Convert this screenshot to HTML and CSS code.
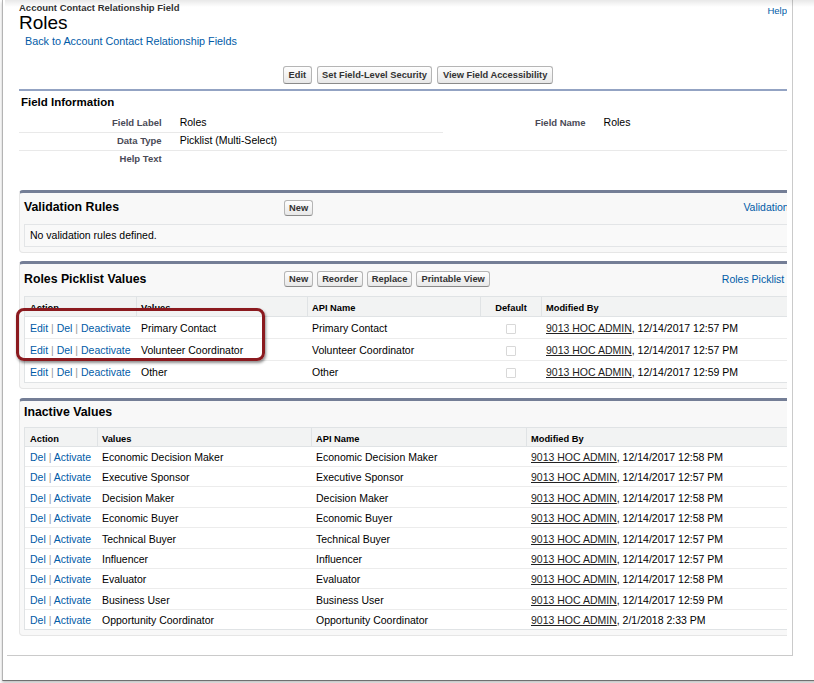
FILE: index.html
```
<!DOCTYPE html>
<html>
<head>
<meta charset="utf-8">
<title>Roles</title>
<link rel="stylesheet" href="styles.css">
</head>
<body>
<div class="window">
  <div class="page">
    <div class="clip">
      <div class="content">
        <div class="pageHeader">
          <div class="titleBlock">
            <div class="ptype">Account Contact Relationship Field</div>
            <h1 class="title">Roles</h1>
            <a class="back" href="#">Back to Account Contact Relationship Fields</a>
          </div>
          <a class="helpTop" href="#">Help</a>
        </div>

        <div class="topButtons">
          <span class="btn">Edit</span>
          <span class="btn">Set Field-Level Security</span>
          <span class="btn">View Field Accessibility</span>
        </div>

        <div class="detail">
          <h2>Field Information</h2>
          <table class="detailList">
            <tr>
              <td class="lab">Field Label</td>
              <td class="dat">Roles</td>
              <td class="lab nb">Field Name</td>
              <td class="dat nb">Roles</td>
            </tr>
            <tr>
              <td class="lab">Data Type</td>
              <td class="dat">Picklist (Multi-Select)</td>
              <td class="lab"></td>
              <td class="dat"></td>
            </tr>
            <tr>
              <td class="lab nb">Help Text</td>
              <td class="dat nb"></td>
              <td class="lab nb"></td>
              <td class="dat nb"></td>
            </tr>
          </table>
        </div>

        <div class="rl rl-first">
          <div class="rlHeader">
            <h3 class="rlTitle">Validation Rules</h3>
            <div class="rlButtons"><span class="btn sm">New</span></div>
            <a class="rlHelp" href="#">Validation Rules Help</a>
          </div>
          <div class="pbBody">
            <div class="noRows">No validation rules defined.</div>
          </div>
        </div>

        <div class="rl rl-roles">
          <div class="rlHeader tall">
            <h3 class="rlTitle">Roles Picklist Values</h3>
            <div class="rlButtons">
              <span class="btn sm">New</span>
              <span class="btn sm">Reorder</span>
              <span class="btn sm">Replace</span>
              <span class="btn sm">Printable View</span>
            </div>
            <a class="rlHelp" href="#">Roles Picklist Values Help</a>
          </div>
          <div class="pbBody">
            <table class="list">
              <colgroup>
                <col class="r1"><col class="r2"><col class="r3"><col class="r4"><col>
              </colgroup>
              <tr>
                <th>Action</th><th>Values</th><th>API Name</th><th class="ctr">Default</th><th>Modified By</th>
              </tr>
              <tr>
                <td><a href="#">Edit</a><span class="sep"> | </span><a href="#">Del</a><span class="sep"> | </span><a href="#">Deactivate</a></td>
                <td>Primary Contact</td><td>Primary Contact</td>
                <td class="ctr"><span class="cb"></span></td>
                <td><span class="user">9013 HOC ADMIN</span>, 12/14/2017 12:57 PM</td>
              </tr>
              <tr>
                <td><a href="#">Edit</a><span class="sep"> | </span><a href="#">Del</a><span class="sep"> | </span><a href="#">Deactivate</a></td>
                <td>Volunteer Coordinator</td><td>Volunteer Coordinator</td>
                <td class="ctr"><span class="cb"></span></td>
                <td><span class="user">9013 HOC ADMIN</span>, 12/14/2017 12:57 PM</td>
              </tr>
              <tr>
                <td><a href="#">Edit</a><span class="sep"> | </span><a href="#">Del</a><span class="sep"> | </span><a href="#">Deactivate</a></td>
                <td>Other</td><td>Other</td>
                <td class="ctr"><span class="cb"></span></td>
                <td><span class="user">9013 HOC ADMIN</span>, 12/14/2017 12:59 PM</td>
              </tr>
            </table>
          </div>
          <div class="highlight"></div>
        </div>

        <div class="rl rl-inactive">
          <div class="rlHeader short">
            <h3 class="rlTitle">Inactive Values</h3>
          </div>
          <div class="pbBody">
            <table class="list compact">
              <colgroup>
                <col class="i1"><col class="i2"><col class="i3"><col>
              </colgroup>
              <tr><th>Action</th><th>Values</th><th>API Name</th><th>Modified By</th></tr>
              <tr><td><a href="#">Del</a><span class="sep"> | </span><a href="#">Activate</a></td><td>Economic Decision Maker</td><td>Economic Decision Maker</td><td><span class="user">9013 HOC ADMIN</span>, 12/14/2017 12:58 PM</td></tr>
              <tr><td><a href="#">Del</a><span class="sep"> | </span><a href="#">Activate</a></td><td>Executive Sponsor</td><td>Executive Sponsor</td><td><span class="user">9013 HOC ADMIN</span>, 12/14/2017 12:57 PM</td></tr>
              <tr><td><a href="#">Del</a><span class="sep"> | </span><a href="#">Activate</a></td><td>Decision Maker</td><td>Decision Maker</td><td><span class="user">9013 HOC ADMIN</span>, 12/14/2017 12:58 PM</td></tr>
              <tr><td><a href="#">Del</a><span class="sep"> | </span><a href="#">Activate</a></td><td>Economic Buyer</td><td>Economic Buyer</td><td><span class="user">9013 HOC ADMIN</span>, 12/14/2017 12:58 PM</td></tr>
              <tr><td><a href="#">Del</a><span class="sep"> | </span><a href="#">Activate</a></td><td>Technical Buyer</td><td>Technical Buyer</td><td><span class="user">9013 HOC ADMIN</span>, 12/14/2017 12:57 PM</td></tr>
              <tr><td><a href="#">Del</a><span class="sep"> | </span><a href="#">Activate</a></td><td>Influencer</td><td>Influencer</td><td><span class="user">9013 HOC ADMIN</span>, 12/14/2017 12:57 PM</td></tr>
              <tr><td><a href="#">Del</a><span class="sep"> | </span><a href="#">Activate</a></td><td>Evaluator</td><td>Evaluator</td><td><span class="user">9013 HOC ADMIN</span>, 12/14/2017 12:58 PM</td></tr>
              <tr><td><a href="#">Del</a><span class="sep"> | </span><a href="#">Activate</a></td><td>Business User</td><td>Business User</td><td><span class="user">9013 HOC ADMIN</span>, 12/14/2017 12:59 PM</td></tr>
              <tr><td><a href="#">Del</a><span class="sep"> | </span><a href="#">Activate</a></td><td>Opportunity Coordinator</td><td>Opportunity Coordinator</td><td><span class="user">9013 HOC ADMIN</span>, 2/1/2018 2:33 PM</td></tr>
            </table>
          </div>
        </div>
      </div>
    </div>
  </div>
</div>
<div class="topShade"></div>
</body>
</html>
```
FILE: styles.css
```
* { box-sizing: border-box; }
html, body { margin: 0; padding: 0; }
body {
  width: 814px;
  height: 683px;
  overflow: hidden;
  position: relative;
  background: #fff;
  font-family: "Liberation Sans", Arial, Helvetica, sans-serif;
  color: #000;
}
a { color: #015ba7; text-decoration: none; }

/* window chrome */
.window {
  margin-left: 2px;
  width: 830px;
  height: 681px;
  border-left: 1px solid #b4b4b4;
  border-bottom: 1px solid #707070;
  box-shadow: 0 2px 3px rgba(0, 0, 0, 0.25);
  padding-left: 4px;
  background: #fff;
}
.page {
  width: 786px;
  height: 656px;
  border-right: 1px solid #cacaca;
  border-bottom: 1px solid #cacaca;
}
.clip {
  width: 780px;
  height: 655px;
  overflow: hidden;
}
.content {
  width: 860px;
  padding-left: 12px;
}
.topShade {
  position: absolute;
  top: 0;
  left: 5px;
  right: 0;
  height: 7px;
  background: linear-gradient(rgba(0, 0, 0, 0.09), rgba(0, 0, 0, 0));
}

/* page header */
.pageHeader {
  display: flex;
  justify-content: space-between;
  align-items: flex-start;
}
.ptype {
  font-weight: bold;
  font-size: 9.5px;
  line-height: 11px;
  padding-top: 1.5px;
  color: #333;
}
.title {
  margin: 0;
  font-weight: normal;
  font-size: 19px;
  line-height: 20px;
  color: #000;
}
.back {
  display: block;
  margin-top: 2px;
  padding-left: 6px;
  font-size: 10.8px;
  line-height: 13px;
}
.helpTop {
  font-size: 9.5px;
  line-height: 12px;
  padding-top: 4.7px;
  margin-right: 80px;
  white-space: nowrap;
}

/* buttons */
.topButtons {
  display: flex;
  gap: 5px;
  padding-left: 264px;
  margin-top: 18.5px;
}
.btn {
  display: inline-block;
  font-weight: bold;
  font-size: 9.3px;
  line-height: 16px;
  height: 18px;
  padding: 0 4.5px;
  color: #333;
  border: 1px solid #b5b5b5;
  border-bottom-color: #8a8a8a;
  border-radius: 3px;
  background: linear-gradient(#fefefe, #e8e8e8);
  white-space: nowrap;
}
.btn.sm {
  line-height: 14px;
  height: 16px;
  padding: 0 4px;
}

/* detail block */
.detail {
  margin-top: 4.5px;
  border-top: 2px solid #93a3c3;
}
.detail h2 {
  margin: 0;
  padding: 4px 0 0 2px;
  font-size: 11.5px;
  line-height: 14px;
  font-weight: bold;
  color: #000;
}
.detailList {
  width: 100%;
  table-layout: fixed;
  border-collapse: separate;
  border-spacing: 0;
  margin-top: 6px;
}
.detailList td {
  padding-top: 1px;
  padding-bottom: 3px;
  line-height: 13px;
  vertical-align: top;
  border-bottom: 1px solid #e9e9e9;
}
.detailList td.lab {
  width: 18%;
  text-align: right;
  padding-right: 10px;
  font-weight: bold;
  font-size: 9.5px;
  color: #4a4a56;
}
.detailList td.dat {
  width: 32%;
  padding-left: 8px;
  font-size: 10.5px;
}
.detailList td.nb { border-bottom: none; }

/* related lists */
.rl {
  position: relative;
  background: #f8f8f8;
  border: 1px solid #e6e6e6;
  border-top: 3px solid #747e96;
  border-radius: 4px;
}
.rl-first { margin-top: 22px; }
.rl-roles { margin-top: 8px; }
.rl-inactive { margin-top: 9px; }
.rlHeader {
  display: flex;
  align-items: center;
  height: 25px;
  padding-top: 5px;
  margin-bottom: 6px;
}
.rlHeader.tall { height: 26px; }
.rlHeader.short { height: 20px; padding-top: 4px; }
.rlTitle {
  margin: 0;
  width: 264px;
  flex: none;
  padding-left: 4px;
  font-size: 12.3px;
  line-height: 15px;
  font-weight: bold;
  color: #000;
}
.rlButtons {
  display: flex;
  gap: 4px;
}
.rlHelp {
  margin-left: auto;
  padding-right: 23px;
  font-size: 10.5px;
  line-height: 13px;
  white-space: nowrap;
}
.pbBody {
  margin: 0 5px 0 4px;
  padding-bottom: 5px;
}
.noRows {
  border: 1px solid #e3e5e7;
  background: #f9f9f9;
  padding: 4px 5px 4px;
  font-size: 10.5px;
  line-height: 13px;
}

.list {
  width: 100%;
  table-layout: fixed;
  border-collapse: separate;
  border-spacing: 0;
  background: #fff;
  border: 1px solid #e0e3e5;
}
.list col.r1 { width: 111px; }
.list col.r2 { width: 171px; }
.list col.r3 { width: 173px; }
.list col.r4 { width: 61px; }
.list col.i1 { width: 72px; }
.list col.i2 { width: 214px; }
.list col.i3 { width: 215px; }
.list th {
  background: #f2f3f3;
  font-size: 9.3px;
  font-weight: bold;
  text-align: left;
  line-height: 12px;
  padding: 5px 2px 2px 4px;
  border-bottom: 1px solid #e0e3e5;
  border-left: 1px solid #e0e3e5;
  color: #000;
  white-space: nowrap;
}
.list th:first-child {
  border-left: none;
  padding-left: 5px;
}
.list td {
  font-size: 10.5px;
  line-height: 13px;
  padding: 5px 2px 3px 5px;
  border-bottom: 1px solid #ececec;
  white-space: nowrap;
  overflow: hidden;
  vertical-align: top;
  color: #000;
}
.list tr:last-child td { border-bottom: none; }
.list.compact th { padding-bottom: 1px; }
.list.compact td {
  padding-top: 4.5px;
  padding-bottom: 1.5px;
  line-height: 13.4px;
}
.list .ctr { text-align: center; padding-left: 2px; }
.sep { color: #999; }
.user {
  color: #222;
  text-decoration: underline;
}
.cb {
  display: inline-block;
  width: 10px;
  height: 10px;
  vertical-align: middle;
  border: 1px solid #d8d8d8;
  border-radius: 1px;
  background: #fff;
}

/* annotation overlay */
.highlight {
  position: absolute;
  left: -4px;
  top: 44px;
  width: 249px;
  height: 53px;
  border: 3.5px solid #8b1a1f;
  border-radius: 8px;
  box-shadow: 1px 2px 3px rgba(0, 0, 0, 0.45);
  pointer-events: none;
}
```
